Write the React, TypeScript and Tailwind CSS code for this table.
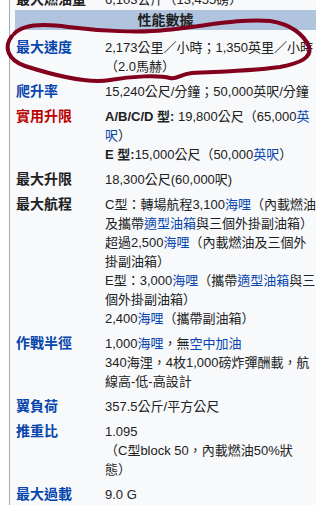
import React from 'react';

type Row = {
  label: string;
  tone?: 'link' | 'red' | 'plain';
  lines: React.ReactNode[];
};

const A = ({ children }: { children: React.ReactNode }) => (
  <span className="text-[#0645ad]">{children}</span>
);

const rows: Row[] = [
  {
    label: '最大速度',
    lines: ['2,173公里／小時；1,350英里／小時', '（2.0馬赫）'],
  },
  { label: '爬升率', lines: ['15,240公尺/分鐘；50,000英呎/分鐘'] },
  {
    label: '實用升限',
    tone: 'red',
    lines: [
      <>
        <b>A/B/C/D 型:</b> 19,800公尺（65,000<A>英</A>
      </>,
      <>
        <A>呎</A>）
      </>,
      <>
        <b>E 型:</b>15,000公尺（50,000<A>英呎</A>）
      </>,
    ],
  },
  { label: '最大升限', tone: 'plain', lines: ['18,300公尺(60,000呎)'] },
  {
    label: '最大航程',
    tone: 'plain',
    lines: [
      <>
        C型：轉場航程3,100<A>海哩</A>（內載燃油
      </>,
      <>
        及攜帶<A>適型油箱</A>與三個外掛副油箱）
      </>,
      <>
        超過2,500<A>海哩</A>（內載燃油及三個外
      </>,
      '掛副油箱）',
      <>
        E型：3,000<A>海哩</A>（攜帶<A>適型油箱</A>與三
      </>,
      '個外掛副油箱）',
      <>
        2,400<A>海哩</A>（攜帶副油箱）
      </>,
    ],
  },
  {
    label: '作戰半徑',
    lines: [
      <>
        1,000<A>海哩</A>，無<A>空中加油</A>
      </>,
      '340海浬，4枚1,000磅炸彈酬載，航',
      '線高-低-高設計',
    ],
  },
  { label: '翼負荷', lines: ['357.5公斤/平方公尺'] },
  {
    label: '推重比',
    lines: ['1.095', '（C型block 50，內載燃油50%狀', '態）'],
  },
  { label: '最大過載', lines: ['9.0 G'] },
];

function InfoRow({ row }: { row: Row }) {
  const tone =
    row.tone === 'red'
      ? 'text-[#ba0000]'
      : row.tone === 'plain'
        ? 'text-[#202122]'
        : 'text-[#0645ad]';
  return (
    <div className="grid grid-cols-[90px_1fr] py-[3px]">
      <div className={`pl-[1px] text-[14px] font-bold leading-[19px] ${tone}`}>
        {row.label}
      </div>
      <div className="text-[13px] leading-[19px] text-[#202122] whitespace-nowrap">
        {row.lines.map((l, i) => (
          <div key={i}>{l}</div>
        ))}
      </div>
    </div>
  );
}

export default function App() {
  return (
    <div className="relative w-[316px] h-[505px] overflow-hidden bg-white font-['Liberation_Sans','Noto_Sans_CJK_TC',sans-serif]">
      <div className="ml-[9px] h-full border-l border-[#a2a9b1] bg-[#f8f9fa] pl-[5px]">
        {/* row cut off by the top edge */}
        <div className="h-[10px] overflow-hidden">
          <div className="-mt-[10.5px] grid grid-cols-[90px_1fr]">
            <div className="pl-[1px] text-[14px] font-bold leading-[19px] text-[#202122]">
              最大燃油量
            </div>
            <div className="text-[13px] leading-[19px] text-[#202122] whitespace-nowrap">
              6,103公斤（13,455磅）
            </div>
          </div>
        </div>

        <div className="h-[20px] bg-[#b0c4de] text-center text-[14px] font-bold leading-[20px] text-[#202122]">
          性能數據
        </div>

        <div className="mt-[5px]">
          {rows.map((r) => (
            <InfoRow key={r.label} row={r} />
          ))}
        </div>
      </div>

      {/* hand-drawn marker ring */}
      <svg
        className="pointer-events-none absolute left-0 top-0"
        width="316"
        height="505"
        viewBox="0 0 316 505"
      >
        <path
          d="M14 34 C22 25 40 23 68 27 C100 31 140 33 165 30 C200 27 240 18 270 21 C290 24 304 34 309 47 C312 58 300 63 280 67 C250 71 215 72 192 73 C180 74 177 80 170 78 C160 75 132 76 110 80 C88 84 50 74 25 66 C8 60 3 47 12 36"
          fill="none"
          stroke="#82001e"
          strokeWidth="4"
          strokeLinecap="round"
          strokeLinejoin="round"
        />
      </svg>
    </div>
  );
}
